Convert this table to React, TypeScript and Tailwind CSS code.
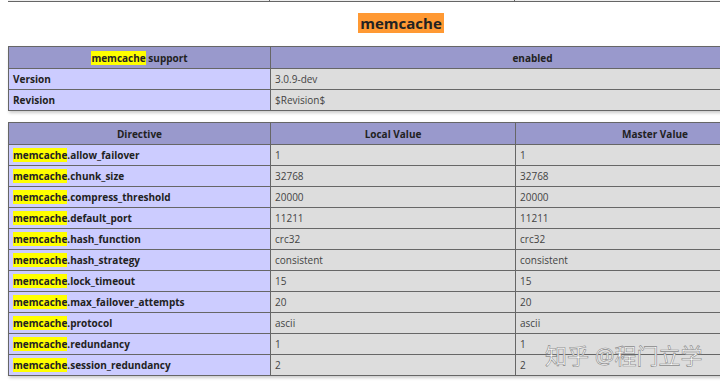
import React from "react";

const font = { fontFamily: '"Open Sans", "Noto Sans", "Noto Sans CJK SC", sans-serif' };

const directives: [string, string][] = [
  ["allow_failover", "1"],
  ["chunk_size", "32768"],
  ["compress_threshold", "20000"],
  ["default_port", "11211"],
  ["hash_function", "crc32"],
  ["hash_strategy", "consistent"],
  ["lock_timeout", "15"],
  ["max_failover_attempts", "20"],
  ["protocol", "ascii"],
  ["redundancy", "1"],
  ["session_redundancy", "2"],
];

const Mark = () => <span className="bg-[#ffff00]">memcache</span>;

const cell = "border border-[#666] h-[21px] px-[4px] py-0 text-[10px] leading-[14px] align-middle";
const head = `${cell} bg-[#9999cc] font-bold text-center text-[#222] h-[22px]`;
const e = `${cell} bg-[#ccccff] font-bold text-left text-[#222] w-[262px]`;
const v = `${cell} bg-[#dddddd] text-left text-[#444]`;

export default function App() {
  return (
    <div className="relative h-[384px] w-[720px] overflow-hidden bg-white" style={font}>
      <div className="w-[795px] pl-[8px]">
        {/* tail end of the previous table */}
        <div className="flex h-[2px] w-[787px] border-b border-[#666] bg-[#eeeeee]">
          <div className="w-[262px] border-r border-[#666]" />
          <div className="w-[245px] border-r border-[#666]" />
        </div>
      </div>

      <div className="flex w-[802px] justify-center pt-[11px]">
        <h2 className="bg-[#ff9933] px-[2px] text-[15px] font-bold leading-[20px] text-[#222]">memcache</h2>
      </div>

      <div className="pl-[8px] pt-[13px]">
        <table className="w-[787px] table-fixed border-collapse shadow-[1px_2px_3px_#ccc]">
          <tbody>
            <tr>
              <th className={`${head} w-[262px]`}>
                <Mark /> support
              </th>
              <th className={head}>enabled</th>
            </tr>
            <tr>
              <td className={e}>Version</td>
              <td className={v}>3.0.9-dev</td>
            </tr>
            <tr>
              <td className={e}>Revision</td>
              <td className={v}>$Revision$</td>
            </tr>
          </tbody>
        </table>
      </div>

      <div className="pl-[8px] pt-[11px]">
        <table className="w-[787px] table-fixed border-collapse shadow-[1px_2px_3px_#ccc]">
          <tbody>
            <tr>
              <th className={`${head} w-[262px]`}>Directive</th>
              <th className={`${head} w-[245px]`}>Local Value</th>
              <th className={head}>Master Value</th>
            </tr>
            {directives.map(([name, val]) => (
              <tr key={name}>
                <td className={e}>
                  <Mark />.{name}
                </td>
                <td className={v}>{val}</td>
                <td className={v}>{val}</td>
              </tr>
            ))}
          </tbody>
        </table>
      </div>

      <div className="absolute left-[545px] top-[341px] text-[22px] leading-[28px] text-white [-webkit-text-stroke:0.6px_#888]">
        知乎 @程门立学
      </div>
    </div>
  );
}
